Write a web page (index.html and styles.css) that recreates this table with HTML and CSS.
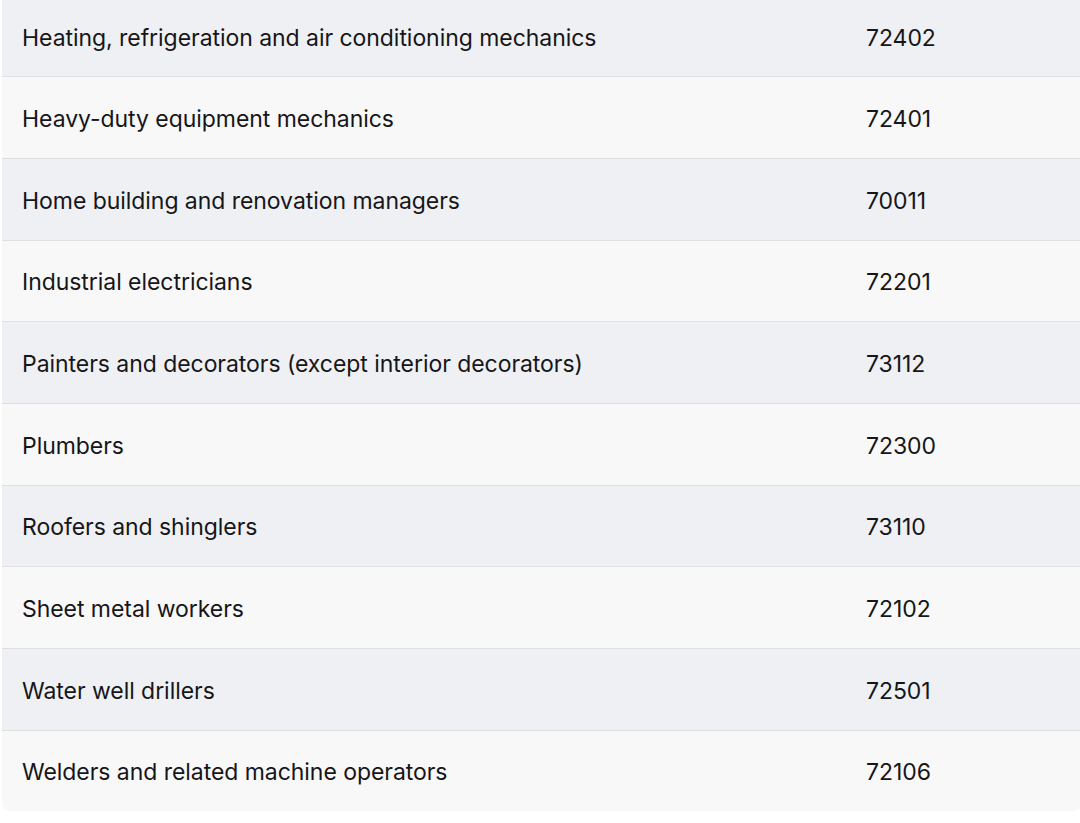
FILE: index.html
```html
<!DOCTYPE html>
<html lang="en">
<head>
<meta charset="utf-8">
<title>Occupations</title>
<link rel="stylesheet" href="styles.css">
</head>
<body>
<div class="wrap">
<table class="occ">
<tbody>
<tr><td class="name">Heating, refrigeration and air conditioning mechanics</td><td class="code">72402</td></tr>
<tr><td class="name">Heavy-duty equipment mechanics</td><td class="code">72401</td></tr>
<tr><td class="name">Home building and renovation managers</td><td class="code">70011</td></tr>
<tr><td class="name">Industrial electricians</td><td class="code">72201</td></tr>
<tr><td class="name">Painters and decorators (except interior decorators)</td><td class="code">73112</td></tr>
<tr><td class="name">Plumbers</td><td class="code">72300</td></tr>
<tr><td class="name">Roofers and shinglers</td><td class="code">73110</td></tr>
<tr><td class="name">Sheet metal workers</td><td class="code">72102</td></tr>
<tr><td class="name">Water well drillers</td><td class="code">72501</td></tr>
<tr><td class="name">Welders and related machine operators</td><td class="code">72106</td></tr>
</tbody>
</table>
</div>
</body>
</html>
```
FILE: styles.css
```css
html, body {
  margin: 0;
  padding: 0;
  background: #ffffff;
}
body {
  font-family: Inter, "Noto Sans", "Liberation Sans", sans-serif;
  color: #161618;
  overflow: hidden;
}
.wrap {
  margin: -4.33px 0 0 2px;
  width: 1080px;
}
.occ {
  width: 100%;
  table-layout: fixed;
  border-collapse: separate;
  border-spacing: 0;
  border-radius: 0 0 8px 8px;
  overflow: hidden;
}
.occ td {
  padding: 3px 20px 0;
  font-size: 23px;
  line-height: 28px;
  letter-spacing: -0.05px;
  vertical-align: middle;
  border-bottom: 1px solid #dedfe3;
  box-sizing: border-box;
  height: 81.67px;
}
.occ tr:nth-child(odd) td { background: #eff0f4; }
.occ tr:nth-child(even) td { background: #f8f8f8; }
.occ tr:last-child td { border-bottom: none; height: 80.67px; }
.occ .name { width: 844px; }
.occ .code { width: auto; }
```
